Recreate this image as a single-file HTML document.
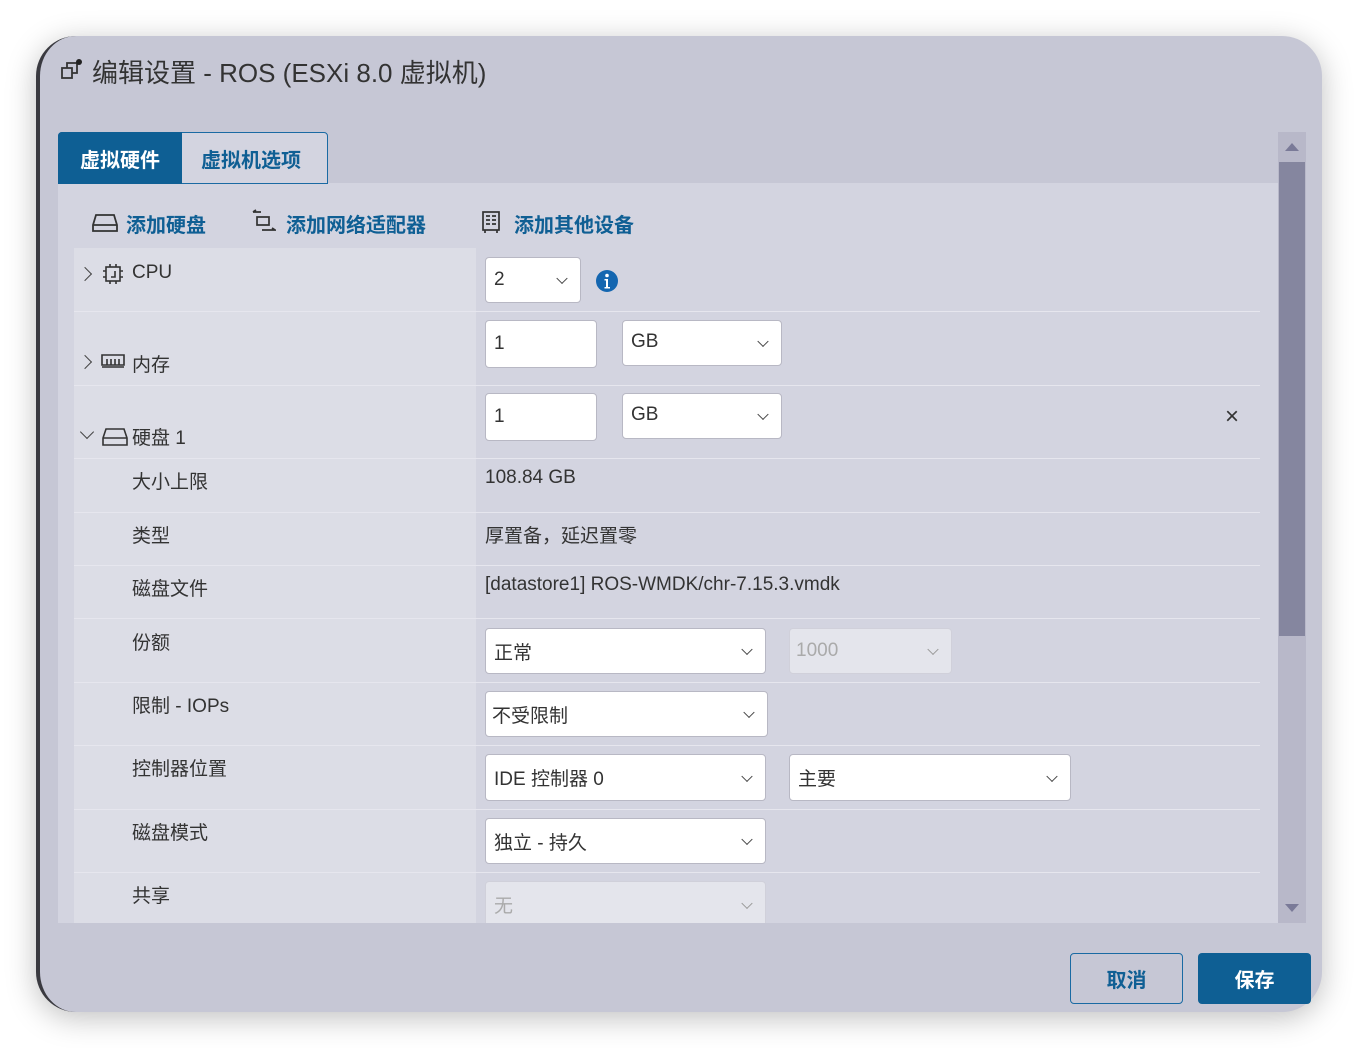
<!DOCTYPE html>
<html><head><meta charset="utf-8"><style>
*{box-sizing:border-box;margin:0;padding:0}
body{width:1358px;height:1048px;background:#fff;position:relative;overflow:hidden;font-family:"Liberation Sans","Noto Sans CJK SC",sans-serif;color:#333}
.dlg{position:absolute;left:36px;top:36px;width:1286px;height:976px;border-radius:40px;background:#c6c7d5;box-shadow:0 6px 30px rgba(0,0,0,.25);overflow:hidden;border-left:4px solid #3a3a40}
.a{position:absolute}
.title{left:92px;top:53px;font-size:26px;color:#333}
.content{left:58px;top:183px;width:1220px;height:740px;background:#d3d4e0}
.lab{left:74px;width:402px;background:#dcdde6}
.line{left:74px;width:1186px;height:1px;background:#e6e6ee}
.lt{font-size:19px;color:#333}
.box{background:#fff;border:1px solid #b8b8c4;border-radius:4px;font-size:19px;padding:0 8px;display:flex;align-items:center;color:#333}
.chev{position:absolute;right:14px;top:50%;width:8px;height:8px;border-right:1.5px solid #444;border-bottom:1.5px solid #444;transform:translateY(-70%) rotate(45deg)}
.dis{background:#e4e5ec;color:#aaa;border-color:#d0d0da}
.dis .chev{border-color:#999}
.blue{color:#0f5f94;font-weight:bold;font-size:20px}
.arr{position:absolute;width:10px;height:10px;border-right:1.6px solid #444;border-bottom:1.6px solid #444}
</style></head><body>
<div class="dlg"></div>
<svg class="a" style="left:60px;top:58px" width="24" height="24" viewBox="0 0 24 24" fill="none" stroke="#333" stroke-width="1.8"><rect x="2" y="10" width="10" height="10"/><path d="M7 10V5h10v10h-5"/><circle cx="19" cy="4" r="3" fill="#222" stroke="none"/></svg>
<div class="a title">编辑设置 - ROS (ESXi 8.0 虚拟机)</div>
<div class="a content"></div>
<div class="a" style="left:58px;top:132px;width:270px;height:52px;border:1.5px solid #1a6aa3;border-radius:4px 4px 0 0;background:#d3d4e0"></div>
<div class="a" style="left:58px;top:132px;width:124px;height:52px;background:#0e5f94;border-radius:4px 0 0 0;color:#fff;font-weight:bold;font-size:20px;display:flex;align-items:center;justify-content:center">虚拟硬件</div>
<div class="a blue" style="left:201px;top:144px">虚拟机选项</div>
<svg class="a" style="left:92px;top:211px" width="26" height="22" viewBox="0 0 26 22" fill="none" stroke="#333" stroke-width="1.8"><path d="M4 4h18l3 10v6H1v-6z M1 14h24"/></svg>
<div class="a blue" style="left:126px;top:209px">添加硬盘</div>
<svg class="a" style="left:252px;top:209px" width="24" height="24" viewBox="0 0 24 24" fill="none" stroke="#333" stroke-width="1.7"><path d="M1 3h8M1 3l3-2M5 8h12v8H5z M10 21h13l-3-2"/></svg>
<div class="a blue" style="left:286px;top:209px">添加网络适配器</div>
<svg class="a" style="left:481px;top:210px" width="20" height="24" viewBox="0 0 20 24" fill="none" stroke="#333" stroke-width="1.7"><rect x="2" y="2" width="16" height="18"/><path d="M5 6h4M11 6h4M5 10h4M11 10h4M5 14h4M11 14h4M4 20v3M16 20v3"/></svg>
<div class="a blue" style="left:514px;top:209px">添加其他设备</div>

<div class="a lab" style="top:248px;height:675px"></div>
<div class="a line" style="top:311px"></div>
<div class="a line" style="top:385px"></div>
<div class="a line" style="top:458px"></div>
<div class="a line" style="top:512px"></div>
<div class="a line" style="top:565px"></div>
<div class="a line" style="top:618px"></div>
<div class="a line" style="top:682px"></div>
<div class="a line" style="top:745px"></div>
<div class="a line" style="top:809px"></div>
<div class="a line" style="top:872px"></div>

<div class="arr" style="left:80px;top:269px;transform:rotate(-45deg)"></div>
<svg class="a" style="left:102px;top:263px" width="22" height="22" viewBox="0 0 22 22" fill="none" stroke="#333" stroke-width="1.6"><rect x="4" y="4" width="14" height="14"/><path d="M8 1v3M14 1v3M8 18v3M14 18v3M1 8h3M1 14h3M18 8h3M18 14h3M13 8v6H9"/></svg>
<div class="a lt" style="left:132px;top:262px">CPU</div>
<div class="a box" style="left:485px;top:257px;width:96px;height:46px">2<span class="chev"></span></div>
<svg class="a" style="left:595px;top:269px" width="24" height="24" viewBox="0 0 24 24"><circle cx="12" cy="12" r="11" fill="#1466b0"/><circle cx="12" cy="6.5" r="1.8" fill="#fff"/><path d="M9.5 10h3.5v8h2v1.5H9.5V18h1.5v-6.5H9.5z" fill="#fff"/></svg>

<div class="arr" style="left:80px;top:357px;transform:rotate(-45deg)"></div>
<svg class="a" style="left:101px;top:353px" width="24" height="16" viewBox="0 0 24 16" fill="none" stroke="#333" stroke-width="1.6"><path d="M1 2h22v10H1zM6 6v6M10 6v6M14 6v6M18 6v6M1 14h22"/></svg>
<div class="a lt" style="left:132px;top:350px">内存</div>
<div class="a box" style="left:485px;top:320px;width:112px;height:48px">1</div>
<div class="a box" style="left:622px;top:320px;width:160px;height:46px;align-items:flex-start;padding-top:10px">GB<span class="chev"></span></div>

<div class="arr" style="left:82px;top:427px;transform:rotate(45deg)"></div>
<svg class="a" style="left:102px;top:427px" width="26" height="20" viewBox="0 0 26 20" fill="none" stroke="#333" stroke-width="1.6"><path d="M4 2h18l3 9v7H1v-7z M1 11h24"/></svg>
<div class="a lt" style="left:132px;top:423px">硬盘 1</div>
<div class="a box" style="left:485px;top:393px;width:112px;height:48px">1</div>
<div class="a box" style="left:622px;top:393px;width:160px;height:46px;align-items:flex-start;padding-top:10px">GB<span class="chev"></span></div>
<div class="a" style="left:1225px;top:403px;font-size:24px;color:#333">×</div>

<div class="a lt" style="left:132px;top:467px">大小上限</div>
<div class="a lt" style="left:485px;top:467px">108.84 GB</div>
<div class="a lt" style="left:132px;top:521px">类型</div>
<div class="a lt" style="left:485px;top:521px">厚置备，延迟置零</div>
<div class="a lt" style="left:132px;top:574px">磁盘文件</div>
<div class="a lt" style="left:485px;top:574px">[datastore1] ROS-WMDK/chr-7.15.3.vmdk</div>
<div class="a lt" style="left:132px;top:628px">份额</div>
<div class="a box" style="left:485px;top:628px;width:281px;height:46px">正常<span class="chev"></span></div>
<div class="a box dis" style="left:789px;top:628px;width:163px;height:46px;padding-left:6px">1000<span class="chev"></span></div>
<div class="a lt" style="left:132px;top:691px">限制 - IOPs</div>
<div class="a box" style="left:485px;top:691px;width:283px;height:46px;padding-left:6px">不受限制<span class="chev"></span></div>
<div class="a lt" style="left:132px;top:754px">控制器位置</div>
<div class="a box" style="left:485px;top:754px;width:281px;height:47px">IDE 控制器 0<span class="chev"></span></div>
<div class="a box" style="left:789px;top:754px;width:282px;height:47px">主要<span class="chev"></span></div>
<div class="a lt" style="left:132px;top:818px">磁盘模式</div>
<div class="a box" style="left:485px;top:818px;width:281px;height:46px">独立 - 持久<span class="chev"></span></div>
<div class="a lt" style="left:132px;top:881px">共享</div>
<div class="a box dis" style="left:485px;top:881px;width:281px;height:46px;border-bottom:none;border-radius:4px 4px 0 0">无<span class="chev"></span></div>
<div class="a" style="left:58px;top:923px;width:1230px;height:20px;background:#c6c7d5"></div>

<div class="a" style="left:1278px;top:132px;width:28px;height:791px;background:#b8b8c9"></div>
<div class="a" style="left:1279px;top:162px;width:26px;height:474px;background:#85869f"></div>
<div class="a" style="left:1285px;top:143px;width:0;height:0;border-left:7px solid transparent;border-right:7px solid transparent;border-bottom:8px solid #7a7a98"></div>
<div class="a" style="left:1285px;top:904px;width:0;height:0;border-left:7px solid transparent;border-right:7px solid transparent;border-top:8px solid #7a7a98"></div>

<div class="a" style="left:1070px;top:953px;width:113px;height:51px;border:1.5px solid #1a6aa3;border-radius:4px;color:#0f5f94;font-weight:bold;font-size:20px;display:flex;align-items:center;justify-content:center">取消</div>
<div class="a" style="left:1198px;top:953px;width:113px;height:51px;background:#0e5f94;border-radius:4px;color:#fff;font-weight:bold;font-size:20px;display:flex;align-items:center;justify-content:center">保存</div>
</body></html>
